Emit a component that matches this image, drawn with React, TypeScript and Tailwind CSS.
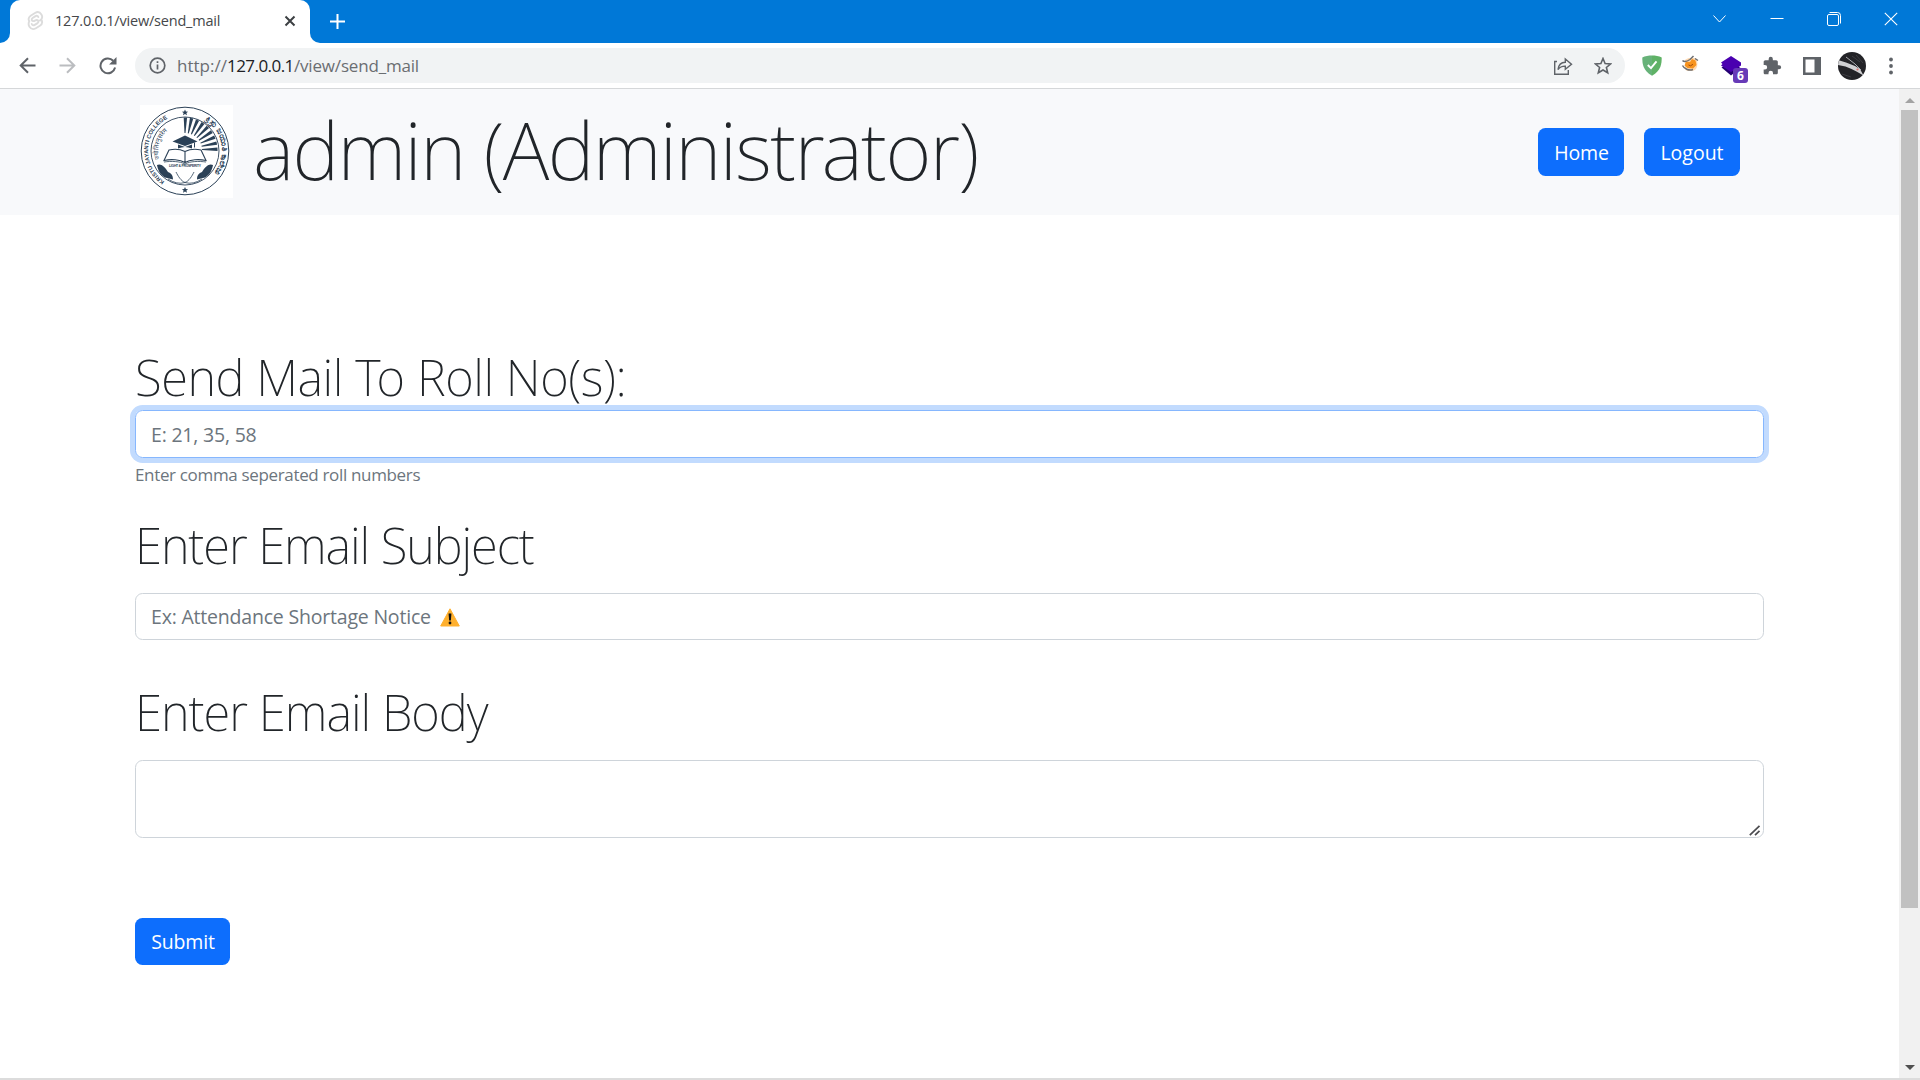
import type { ReactNode } from 'react';

function SvelteMark() {
  return (
    <svg width="17" height="20" viewBox="0 0 17 20" fill="none" stroke="#dcdcdc" strokeWidth="1.9" strokeLinecap="round">
      <path d="M12.9 9.6c2.4-1.500 2.900-4 1.500-6.200C12.900 1.100 10.200.7 8 2L4 4.500C1.600 6 1 8.500 2.300 10.200c-1 2-.9 3.900.2 5.600 1.500 2.300 4.100 2.800 6.400 1.400l4-2.500c2.400-1.500 2.700-3.500 1.700-5.600" />
      <path d="M11.300 6c-.5-1.400-1.700-1.500-2.800-.9L5.600 7c-1.700 1.200-.8 3.400 1.100 3.100.9-.2 2.100-1.200 3.100-1.100 1.700.2 2.200 2 .8 3.100l-2.900 1.800c-1.300.8-2.700.3-3-1" />
    </svg>
  );
}

function TabBar() {
  return (
    <div className="flex h-[43px] bg-[#0078d7]">
      <div className="flex w-[10px] items-end bg-white">
        <div className="h-[43px] w-[10px] rounded-br-[10px] bg-[#0078d7]" />
      </div>
      <div className="bg-[#0078d7]">
        <div className="flex h-[43px] w-[300px] items-center rounded-t-[10px] bg-white pr-[14px] pb-[1px] pl-[17px]">
          <SvelteMark />
          <span className="ml-[11px] flex-1 text-[14.5px] leading-5 tracking-[-0.2px] text-[#45474a]">127.0.0.1/view/send_mail</span>
          <svg width="12" height="12" viewBox="0 0 12 12" stroke="#3c4043" strokeWidth="2">
            <path d="M1.500 1.500l9 9M10.500 1.500l-9 9" />
          </svg>
        </div>
      </div>
      <div className="w-[10px] bg-white">
        <div className="h-[43px] w-[10px] rounded-bl-[10px] bg-[#0078d7]" />
      </div>
      <svg className="mt-[13px] ml-[9px]" width="17" height="17" viewBox="0 0 17 17" stroke="#fff" strokeWidth="2">
        <path d="M8.500 1v15M1 8.500h15" />
      </svg>
      <div className="ml-auto flex h-[37px] items-center gap-[43px] pr-[22px]">
        <svg width="15" height="14" viewBox="0 0 15 14" fill="none" stroke="#fff" strokeWidth="1">
          <path d="M1.500 3.500l6 6.500 6-6.500" />
        </svg>
        <svg width="14" height="14" viewBox="0 0 14 14" stroke="#fff" strokeWidth="1">
          <path d="M.5 6.500h13" />
        </svg>
        <svg width="14" height="14" viewBox="0 0 14 14" fill="none" stroke="#fff" strokeWidth="1">
          <rect x=".5" y="2.500" width="11" height="11" rx="1.500" />
          <path d="M2.500.5h8a3 3 0 0 1 3 3v8" />
        </svg>
        <svg width="14" height="14" viewBox="0 0 14 14" stroke="#fff" strokeWidth="1.100">
          <path d="M.8.8l12.400 12.400M13.200.8L.8 13.200" />
        </svg>
      </div>
    </div>
  );
}

function Slot({ className, children }: { className: string; children: ReactNode }) {
  return <div className={`flex shrink-0 items-center justify-center ${className}`}>{children}</div>;
}

function Toolbar() {
  return (
    <div className="flex h-[46px] items-center border-b border-[#d5d7d9] bg-white">
      <Slot className="ml-[17px] w-[20px]">
        <svg width="17" height="17" viewBox="0 0 17 17" fill="none" stroke="#5f6368" strokeWidth="2">
          <path d="M16.500 8.500H2M9 1.200L1.700 8.500 9 15.800" />
        </svg>
      </Slot>
      <Slot className="ml-[20px] w-[20px]">
        <svg width="17" height="17" viewBox="0 0 17 17" fill="none" stroke="#bbbdc0" strokeWidth="2">
          <path d="M.5 8.500H15M8 1.200l7.300 7.300L8 15.800" />
        </svg>
      </Slot>
      <Slot className="ml-[21px] w-[20px]">
        <svg width="18" height="18" viewBox="0 0 18 18" fill="none" stroke="#5f6368" strokeWidth="2">
          <path d="M16.100 10.600A7.400 7.400 0 1 1 14.200 3.700" />
          <path d="M17.500 0v7.400h-7.400z" fill="#5f6368" stroke="none" />
        </svg>
      </Slot>
      <div className="ml-[17px] flex h-[35px] w-[1490px] items-center rounded-full bg-[#f1f3f4] pr-[13px] pl-[14px]">
        <svg width="17" height="17" viewBox="0 0 17 17" fill="none" stroke="#5f6368" strokeWidth="1.700">
          <circle cx="8.500" cy="8.500" r="7.300" />
          <path d="M8.500 7.500v5M8.500 4.300v1.800" />
        </svg>
        <div className="ml-[11px] flex text-[17px] leading-6 text-[#6a6d71]">
          <span className="w-[50px] tracking-[0px]">http://</span>
          <span className="w-[67px] tracking-[-0.55px] text-[#202124]">127.0.0.1</span>
          <span className="tracking-[-0.18px]">/view/send_mail</span>
        </div>
        <svg className="mr-[21px] ml-auto" width="20" height="20" viewBox="0 0 20 20" fill="none" stroke="#5f6368" strokeWidth="1.400">
          <path d="M4 5.500H1.700v12.800h13.600V14" />
          <path d="M5 13.500C5.600 8.800 8 6.500 12.300 6.300V3l6.200 5.200-6.200 5v-3.100C9 10 6.800 11 5 13.500z" />
        </svg>
        <svg width="18" height="18" viewBox="0 0 18 18" fill="none" stroke="#5f6368" strokeWidth="1.600">
          <path d="M9 1.500l2.100 5 5.400.5-4.100 3.500 1.300 5.300L9 13l-4.700 2.800 1.300-5.300L1.500 7l5.400-.5z" />
        </svg>
      </div>
      <Slot className="ml-[17px] w-[20px]">
        <svg width="20" height="21" viewBox="0 0 20 21">
          <path d="M10 .5C6.800.5 3 1.100.3 2.500.3 8.500.8 15.700 10 20.700z" fill="#67b279" />
          <path d="M10 .5c3.200 0 7 .6 9.700 2 0 6-.5 13.200-9.700 18.200z" fill="#5fb266" />
          <path d="M5.800 10l3.200 3.200 5.500-6.800" fill="none" stroke="#fff" strokeWidth="1.900" />
        </svg>
      </Slot>
      <Slot className="ml-[18px] w-[20px]">
        <svg className="-translate-y-[2px]" width="18" height="18" viewBox="0 0 18 18">
          <path d="M4 5c3-2.500 8-3 11-1.500 1.800 3 2 7.500 0 10.500-3 2.500-8 2.800-11 .5z" fill="#ffd9b0" />
          <path d="M3.500 10.500L5 6.500 9 7l2-3 3.500 1.500 1 4.500-3.500 3.500-5.500-.5z" fill="#f7931e" />
          <path d="M1.500 5.500C3.500 7.500 6 6.500 9 4.500L12.500 1M1.500 10.500c2 4 7 5.500 10.500 4M14 3.500l3 2" fill="none" stroke="#6d6e70" strokeWidth="1.500" />
          <path d="M7.500 10l2 .8 2.500-1.500" stroke="#a14a0a" strokeWidth="1" fill="none" />
        </svg>
      </Slot>
      <Slot className="relative ml-[20px] w-[22px]">
        <svg width="22" height="22" viewBox="0 0 22 22">
          <path d="M1.500 12.500L11 7l9.500 6L11 20.500z" fill="#240072" />
          <path d="M11 1l10 6.500v3L11 17 1 10.500l1.500-1.500L1 7.500z" fill="#4a00b0" />
        </svg>
        <span className="absolute top-[13px] left-[13px] flex h-[15px] w-[15px] items-center justify-center rounded-[3px] bg-[#673ab7] text-[12px] leading-[15px] font-bold text-white">6</span>
      </Slot>
      <Slot className="ml-[20px] w-[20px]">
        <svg width="20" height="20" viewBox="0 0 24 24" fill="#5f6368">
          <path d="M20.500 11H19V7c0-1.100-.9-2-2-2h-4V3.500a2.500 2.500 0 0 0-5 0V5H4c-1.100 0-1.990.9-1.990 2v3.800H3.500a2.700 2.700 0 0 1 0 5.400H2V20c0 1.100.9 2 2 2h3.800v-1.500a2.700 2.700 0 0 1 5.400 0V22H17c1.100 0 2-.9 2-2v-4h1.500a2.500 2.500 0 0 0 0-5z" />
        </svg>
      </Slot>
      <Slot className="ml-[21px] w-[18px]">
        <svg width="18" height="18" viewBox="0 0 18 18">
          <path d="M0 0h18v18H0zM2.500 2.500v13h9v-13z" fill="#5f6368" fillRule="evenodd" />
        </svg>
      </Slot>
      <Slot className="ml-[17px] w-[28px]">
        <svg width="28" height="28" viewBox="0 0 28 28">
          <defs>
            <clipPath id="avatar"><circle cx="14" cy="14" r="14" /></clipPath>
          </defs>
          <g clipPath="url(#avatar)">
            <path d="M0 0h28v28H0z" fill="#232327" />
            <path d="M0 8l8 2.500 9 3.500 5 3 3.500 6.500-7-4-5-2.500-6-2.500-7.500-1.500z" fill="#d0d0d2" />
            <path d="M8 5l9 7 6 6" stroke="#b9b9bc" strokeWidth=".9" fill="none" />
            <path d="M14 4l8 6M18 3l7 8M4 22l9 3" stroke="#3d3d42" strokeWidth="1" fill="none" />
            <circle cx="19.500" cy="17.500" r="1.100" fill="#d9736f" />
          </g>
        </svg>
      </Slot>
      <Slot className="ml-[22px] w-[6px]">
        <svg width="4" height="18" viewBox="0 0 4 18" fill="#5f6368">
          <circle cx="2" cy="2.500" r="1.900" />
          <circle cx="2" cy="9" r="1.900" />
          <circle cx="2" cy="15.500" r="1.900" />
        </svg>
      </Slot>
    </div>
  );
}

const RAYS = [0, 11, 22, 33, 44, 55, 66, 77, 88];

function CollegeSeal() {
  return (
    <svg className="mb-px" width="93" height="93" viewBox="0 0 93 93" fill="none" stroke="#2b4157">
      <defs>
        <path id="arcLeft" d="M24.500 76.300A36.700 36.700 0 0 1 30 12.200" />
        <path id="arcRight" d="M65.500 15.500A36.700 36.700 0 0 1 63 78" />
        <path id="arcInner" d="M19.500 54A26.700 26.700 0 0 1 35 21.200" />
      </defs>
      <path d="M0 0h93v93H0z" fill="#fff" stroke="none" />
      <circle cx="45" cy="46" r="43.800" strokeWidth="1" />
      <circle cx="45" cy="46" r="34" strokeWidth=".9" />
      <g fill="#2b4157" stroke="none" fontFamily="Liberation Sans">
        <text fontSize="5.700" fontWeight="700">
          <textPath href="#arcLeft">KRISTU JAYANTI COLLEGE</textPath>
        </text>
        <text fontSize="8.300" fontFamily="Noto Sans, sans-serif" fontWeight="600">
          <textPath href="#arcRight">ಕ್ರಿಸ್ತು ಜಯಂತಿ ಕಾಲೇಜು</textPath>
        </text>
        <text fontSize="6.300" fontFamily="Noto Sans, sans-serif">
          <textPath href="#arcInner">ज्योतिरनुसरेम</textPath>
        </text>
        <text x="29" y="62.300" fontSize="3.400" fontWeight="700" textLength="32">LIGHT &amp; PROSPERITY</text>
        <path d="M45 4.500l.9 2.100 2.200.1-1.700 1.400.6 2.200-2-1.300-2 1.300.6-2.200-1.700-1.400 2.200-.1z" />
        <path d="M45 82l.9 2.100 2.200.1-1.700 1.400.6 2.200-2-1.300-2 1.300.6-2.200-1.700-1.400 2.200-.1z" />
        {RAYS.map((a) => (
          <path key={a} d="M44.500 28l-.8-15.500h3.400L45.500 28z" transform={`rotate(${a} 45 45)`} />
        ))}
        <path d="M45 30.500L57.500 36.500 45 41 32.500 36.500z" />
        <path d="M38 39.500l7 2.600 7-2.600v4q-7-3.200-14 0z" />
        <path d="M54 37.500v5h1v-5z" />
        <path d="M17 60c4-2 8 2 11 7 3 1 5 3 5 7.500l-8-2c-5-3-7-7-8-12.500zM73 60c-4-2-8 2-11 7-3 1-5 3-5 7.500l8-2c5-3 7-7 8-12.500z" />
      </g>
      <path d="M45 57.500V46.500c-5-2.500-12-2.500-16-1.500l-5 10.500c7-1.500 16-1 21 2 5-3 14-3.500 21-2L61 45c-4-1-11-1-16 1.500" strokeWidth="1.100" fill="#fff" />
      <path d="M24 57c7-1 16-.8 21 2 5-2.800 14-3 21-2" strokeWidth=".8" />
      <path d="M36 67c2 4 5 9 9 10.500 4-1.500 7-6.500 9-10.500M28 74q9 6 17 3.500 8 2.500 17-3.500" strokeWidth=".8" />
    </svg>
  );
}

function Button({ className, children }: { className: string; children: ReactNode }) {
  return (
    <button type="button" className={`rounded-[7.5px] bg-[#0d6efd] text-center text-[19.5px] leading-7 text-white ${className}`}>
      {children}
    </button>
  );
}

function Navbar() {
  return (
    <header className="flex h-[126px] items-center bg-[#f8f9fb] pr-[159px] pl-[140px]">
      <CollegeSeal />
      <h1 className="ml-[20px] pb-[4px] font-['Noto_Sans'] text-[79px] leading-[96px] font-[200] tracking-[-1.6px] whitespace-nowrap text-[#212529]">
        admin (Administrator)
      </h1>
      <nav className="ml-auto flex gap-[20px]">
        <Button className="h-[48px] w-[86px] pt-[2px] pl-px tracking-[-0.1px]">Home</Button>
        <Button className="h-[48px] w-[96px] pt-[2px]">Logout</Button>
      </nav>
    </header>
  );
}

function Heading({ className, children }: { className: string; children: ReactNode }) {
  return (
    <h2 className={`h-[60px] font-['Noto_Sans'] text-[49px] leading-[62px] font-[200] whitespace-nowrap text-[#212529] ${className}`}>
      {children}
    </h2>
  );
}

function WarningSign() {
  return (
    <svg width="20" height="19" viewBox="0 0 20 19">
      <path d="M10 .8L19.300 18H.7z" fill="#ffb02e" stroke="#ffb02e" strokeWidth="1" strokeLinejoin="round" />
      <path d="M8.600 5.500h2.800L10.900 12.500H9.100z" fill="#111" />
      <circle cx="10" cy="15" r="1.400" fill="#111" />
    </svg>
  );
}

function MailForm() {
  return (
    <form className="mt-[131px] ml-[135px] w-[1629px] text-[19.5px] tracking-[-0.2px] text-[#6c757d]">
      <Heading className="tracking-[-0.45px]">Send Mail To Roll No(s):</Heading>
      <div className="mt-[4px] flex h-[48px] items-center rounded-[7.5px] border border-[#86b7fe] pt-px pl-[15px] shadow-[0_0_0_5px_#c2dbfe]">
        E: 21, 35, 58
      </div>
      <p className="mt-[3px] h-[26px] text-[17px] leading-[28px] tracking-[-0.34px]">Enter comma seperated roll numbers</p>

      <Heading className="mt-[27px] tracking-[-1.1px]">Enter Email Subject</Heading>
      <div className="mt-[19px] flex h-[47px] items-center rounded-[7.5px] border border-[#ced4da] pt-px pl-[15px]">
        <span className="w-[289px]">Ex: Attendance Shortage Notice</span>
        <WarningSign />
      </div>

      <Heading className="mt-[41px] tracking-[-1px]">Enter Email Body</Heading>
      <div className="mt-[19px] flex h-[78px] items-end justify-end rounded-[7.5px] border border-[#ced4da] pr-[2px] pb-[1px]">
        <svg width="12" height="11" viewBox="0 0 12 11" stroke="#4c4c50" strokeWidth="1.700">
          <path d="M.8 10.200L10.500.8M6 10.200l4.500-4.400" />
        </svg>
      </div>

      <Button className="mt-[80px] h-[47px] w-[95px] pl-px">Submit</Button>
    </form>
  );
}

function Scrollbar() {
  return (
    <div className="flex w-[21px] flex-col items-center bg-[#f1f1f1]">
      <div className="flex h-[21px] items-center justify-center pt-[2px]">
        <svg width="10" height="5" viewBox="0 0 10 5"><path d="M0 5L5 0l5 5z" fill="#a3a3a3" /></svg>
      </div>
      <div className="h-[798px] w-[17px] bg-[#c1c1c1]" />
      <svg className="mt-auto mb-[8px]" width="10" height="5" viewBox="0 0 10 5"><path d="M0 0h10L5 5z" fill="#505050" /></svg>
    </div>
  );
}

export default function App() {
  return (
    <div className="flex h-[1080px] w-[1920px] flex-col overflow-hidden bg-white font-['Open_Sans',sans-serif]">
      <TabBar />
      <Toolbar />
      <div className="flex flex-1 border-b-2 border-[#dcdcdc]">
        <main className="flex-1">
          <Navbar />
          <MailForm />
        </main>
        <Scrollbar />
      </div>
    </div>
  );
}
